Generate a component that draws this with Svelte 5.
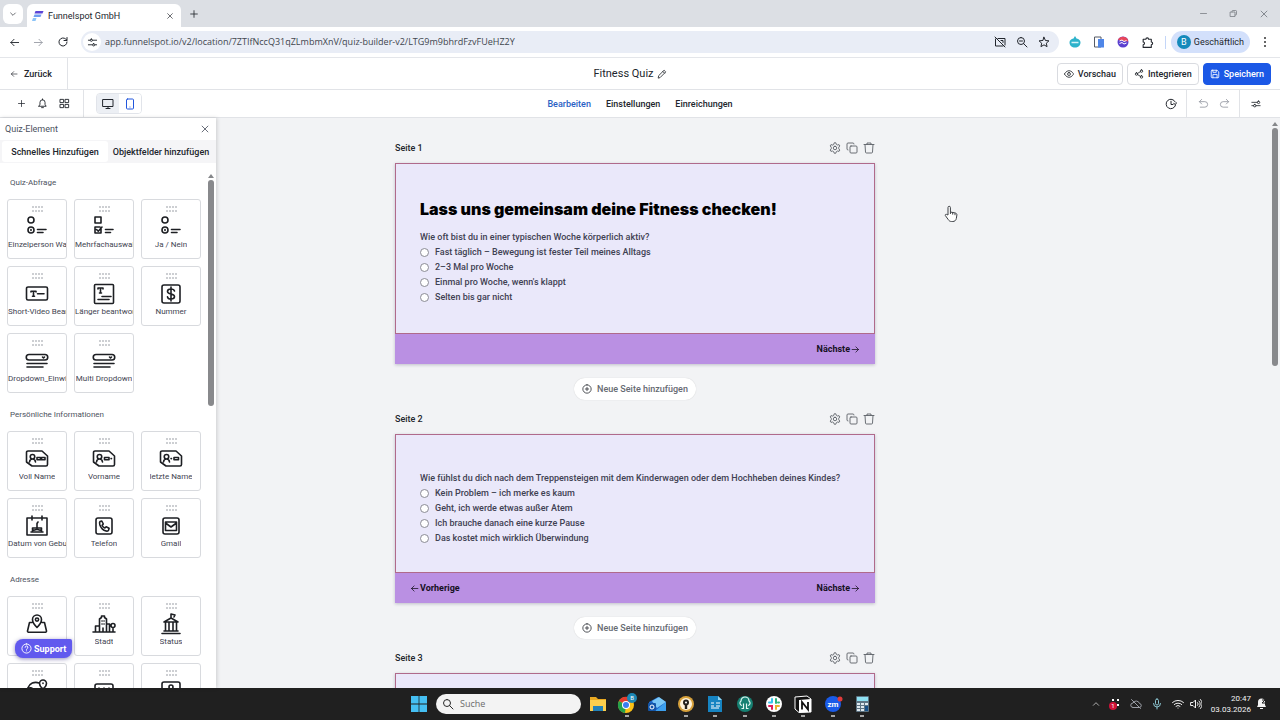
<script>
  // Stroke icons on a 24 x 24 grid
  const icons = {
    chevronDown: 'M5 9l7 7 7-7',
    chevronUp: 'M4 16l8-8 8 8',
    close: 'M5 5l14 14M19 5L5 19',
    plus: 'M12 4v16M4 12h16',
    minimize: 'M4 12h16',
    restore: 'M4 8h12v12H4zM8 8V6a2 2 0 0 1 2-2h8a2 2 0 0 1 2 2v8a2 2 0 0 1-2 2h-2',
    arrowLeft: 'M21 12H4M11 5l-7 7 7 7',
    arrowRight: 'M3 12h17M13 5l7 7-7 7',
    reload: 'M20 12a8 8 0 1 1-2.500-5.800L20 8.500M20 3v6h-6',
    tune: 'M3 7h3M13 7h8M3 17h8M18 17h3M9.500 4.500a2.500 2.500 0 1 0 0 5 2.500 2.500 0 0 0 0-5zM14.500 14.500a2.500 2.500 0 1 0 0 5 2.500 2.500 0 0 0 0-5z',
    noCamera: 'M8 5h14v13M18 20H3V6M2 2l20 20M14 9h4v4',
    zoomOut: 'M10 3a7 7 0 1 0 0 14 7 7 0 0 0 0-14zM15 15l7 7M7 10h6',
    star: 'M12 2.500l2.900 6.500 7 .7-5.300 4.700 1.500 6.900L12 17.700l-6.100 3.600 1.500-6.900L2.100 9.700l7-.7z',
    puzzle: 'M4 6h5a2.500 2.500 0 0 1 5 0h5v5a2.500 2.500 0 0 1 0 5v5H4v-5a2.500 2.500 0 0 0 0-5z',
    pencil: 'M3 21l1-5L17 3l4 4L8 20zM14 6l4 4',
    eye: 'M1 12s4-8 11-8 11 8 11 8-4 8-11 8S1 12 1 12zM12 8.500a3.500 3.500 0 1 0 0 7 3.500 3.500 0 0 0 0-7z',
    share: 'M18 2a3 3 0 1 0 0 6 3 3 0 0 0 0-6zM6 9a3 3 0 1 0 0 6 3 3 0 0 0 0-6zM18 16a3 3 0 1 0 0 6 3 3 0 0 0 0-6zM8.600 13.500l6.800 4M15.400 6.500l-6.800 4',
    save: 'M5 3h12l4 4v12a2 2 0 0 1-2 2H5a2 2 0 0 1-2-2V5a2 2 0 0 1 2-2zM7 3v5h8V3M7 21v-8h10v8',
    bell: 'M4 18h16l-2.500-4V9.500a5.500 5.500 0 0 0-11 0V14zM10 21h4M12 4V2',
    grid: 'M3 3h7v7H3zM14 3h7v7h-7zM3 14h7v7H3zM14 14h7v7h-7z',
    desktop: 'M2 3h20v14H2zM8 21h8M12 17v4',
    mobile: 'M7 2h10a2 2 0 0 1 2 2v16a2 2 0 0 1-2 2H7a2 2 0 0 1-2-2V4a2 2 0 0 1 2-2zM12 18v.1',
    history: 'M20.500 8a9.500 9.500 0 1 0 .5 6.500M23 9.500l-2 3.500-3.500-2M12 6.500V13h4',
    undo: 'M8 3L3 8l5 5M3 8h12a6 6 0 0 1 0 12H5',
    redo: 'M16 3l5 5-5 5M21 8H9a6 6 0 0 0 0 12h10',
    sliders: 'M2 8h13M2 16h4M12 16h10M18 5a3 3 0 1 0 0 6 3 3 0 0 0 0-6zM9 13a3 3 0 1 0 0 6 3 3 0 0 0 0-6z',
    gear: 'M9.500 4.500L10.500 1.500h3l1 3 2.500 1.500 3.100-.7 1.500 2.600L19.500 10.500v3l2.100 2.600-1.500 2.600L17 18l-2.500 1.500-1 3h-3l-1-3L7 18l-3.100.7-1.500-2.600 2.100-2.600v-3L2.400 7.900l1.500-2.600L7 6zM12 8.500a3.500 3.500 0 1 0 0 7 3.500 3.500 0 0 0 0-7z',
    copy: 'M10 8h10a2 2 0 0 1 2 2v10a2 2 0 0 1-2 2H10a2 2 0 0 1-2-2V10a2 2 0 0 1 2-2zM4 16a2 2 0 0 1-2-2V4a2 2 0 0 1 2-2h10a2 2 0 0 1 2 2',
    trash: 'M2 5h20M8 5V2h8v3M4 5l1 15a2 2 0 0 0 2 2h10a2 2 0 0 0 2-2l1-15',
    plusCircle: 'M12 2a10 10 0 1 0 0 20 10 10 0 0 0 0-20zM12 8v8M8 12h8',
    help: 'M12 2a10 10 0 1 0 0 20 10 10 0 0 0 0-20zM9 9.500a3 3 0 1 1 4 2.800c-.7.300-1 .9-1 1.700M12 17v.2',
    search: 'M10 3a7 7 0 1 0 0 14 7 7 0 0 0 0-14zM15 15l7 7',
    mic: 'M12 2a3 3 0 0 1 3 3v6a3 3 0 0 1-6 0V5a3 3 0 0 1 3-3zM5 11a7 7 0 0 0 14 0M12 18v4',
    wifi: 'M1 9a16 16 0 0 1 22 0M4.500 13a11 11 0 0 1 15 0M8 16.500a6 6 0 0 1 8 0M12 20v.2',
    volume: 'M2 9h4l5-5v16l-5-5H2zM15 9a4 4 0 0 1 0 6M18 6a8 8 0 0 1 0 12M21 3a13 13 0 0 1 0 18',
    cloudOff: 'M6 19h12a4 4 0 0 0 1-8 7 7 0 0 0-13-1 4.500 4.500 0 0 0 0 9zM3 3l18 18',

    radio: 'M6 2a3 3 0 1 0 0 6 3 3 0 0 0 0-6zM6 12a3 3 0 1 0 0 6 3 3 0 0 0 0-6zM6 14.600v.8M12.500 14.500h8.500M12.500 17.500h5.500',
    checks: 'M3 2h6v6H3zM9 13v5H3v-6h5M4.500 14.500l1.800 1.700L10 12M13.500 14.500H21M13.500 17.500h5',
    shortText: 'M3 5h18a1.500 1.500 0 0 1 1.500 1.500v10A1.500 1.500 0 0 1 21 18H3a1.500 1.500 0 0 1-1.500-1.500v-10A1.500 1.500 0 0 1 3 5zM6 10V9.200h5V10M8.500 9.200v5M7.500 14.200h2M12.500 11.800h6.500',
    longText: 'M3.500 2.500h17a1 1 0 0 1 1 1v17a1 1 0 0 1-1 1h-17a1 1 0 0 1-1-1v-17a1 1 0 0 1 1-1zM6 7V6h5v1M8.500 6v5M7.500 11h2M10 14.500h9M6 17.500h11',
    number: 'M5 3h14a2 2 0 0 1 2 2v14a2 2 0 0 1-2 2H5a2 2 0 0 1-2-2V5a2 2 0 0 1 2-2zM15.500 9c-.4-1.300-1.700-2-3.500-2-2 0-3.500.9-3.500 2.500 0 3.500 7 1.500 7 5 0 1.600-1.500 2.500-3.500 2.500s-3.300-.8-3.500-2.200M12 5v14',
    dropdown: 'M4 5.500h16a2.500 2.500 0 0 1 0 5.500H4a2.500 2.500 0 0 1 0-5.500zM17.500 8l1 1 1-1M2 14.500h20M2 18h16',
    fullName: 'M3 4h14l5.500 5v8.500A1.500 1.500 0 0 1 21 19H7l-5.500-4V5.500A1.500 1.500 0 0 1 3 4zM7.500 7.500a2 2 0 1 0 0 4.500 2 2 0 0 0 0-4.500zM4.500 15c.5-4 5.500-4 6 0M12 10.500h3.500v2.200H12zM16.500 10.500H20v2.200h-3.500z',
    firstName: 'M3 4h14l5.500 5v8.500A1.500 1.500 0 0 1 21 19H7l-5.500-4V5.500A1.500 1.500 0 0 1 3 4zM7.500 7.500a2 2 0 1 0 0 4.500 2 2 0 0 0 0-4.500zM4.500 15c.5-4 5.500-4 6 0M12.500 10.500H17v2.200h-4.500zM19 11.600h.5',
    lastName: 'M3 4h14l5.500 5v8.500A1.500 1.500 0 0 1 21 19H7l-5.500-4V5.500A1.500 1.500 0 0 1 3 4zM7.500 7.500a2 2 0 1 0 0 4.500 2 2 0 0 0 0-4.500zM4.500 15c.5-4 5.500-4 6 0M15 10.500h4.500v2.200H15zM12 11.600h.5',
    birthday: 'M2 4h20v17H2zM7 2v4M17 2v4M6 18h12M7.500 18v-4h9v4M7.500 15.500c1.500 1.500 3 0 4.500 0s3 1.500 4.500 0M12 14V9.500l1-1.500',
    phone: 'M6 4h12a2 2 0 0 1 2 2v12a2 2 0 0 1-2 2H6a2 2 0 0 1-2-2V6a2 2 0 0 1 2-2zM8 7.500l1.800-.5 1.500 3-1.200 1.200c.6 1.400 1.500 2.200 2.800 2.800l1.200-1.200 3 1.500-.5 1.800c-.3 1-1.500 1.200-2.500.9-3-.8-5.200-3-6.300-6.300-.3-1.200-.3-2.600.2-3.200z',
    mail: 'M6 4h12a2 2 0 0 1 2 2v12a2 2 0 0 1-2 2H6a2 2 0 0 1-2-2V6a2 2 0 0 1 2-2zM6.500 8h11v8.500h-11zM6.500 9l5.500 4 5.500-4',
    address: 'M12 15.500S7.500 11 7.500 7.500a4.500 4.500 0 0 1 9 0C16.500 11 12 15.500 12 15.500zM12 6a1.600 1.600 0 1 0 0 3.200A1.600 1.600 0 0 0 12 6zM7 10.500H4.500L2.500 19a1 1 0 0 0 1 1.200h17a1 1 0 0 0 1-1.200l-2-8.500H17',
    city: 'M1 20h22M3.500 20v-6h4M7.500 20V7l2-1.500V4h3v1.500l2 1.500v13M14.500 12h3v8M10 9h.1M12 9h.1M10 12h.1M12 12h.1M11 20v-4M21 20v-4.500M21 11.500a2 2 0 1 0 0 4 2 2 0 0 0 0-4z',
    state: 'M3 21.500h18M5 19h14M5 10h14l-7-4zM12 6V2l4 1-1 2M6.500 10v9M10 10v9M14 10v9M17.500 10v9',
    country: 'M19 14a8.500 8.500 0 1 1-5-10M4 9c3-1 5 1 4 4M18 10s-3.500-3-3.500-5.500a3.500 3.500 0 0 1 7 0C21.500 7 18 10 18 10zM18 4v.5',
    zip: 'M5 5h14a2 2 0 0 1 2 2v12H3V7a2 2 0 0 1 2-2zM7 9v2M12 9v2M17 9v2',
    website: 'M5 3h14a2 2 0 0 1 2 2v14H3V5a2 2 0 0 1 2-2zM12 6a2 2 0 1 0 0 4 2 2 0 0 0 0-4zM8 14c0-4 8-4 8 0'
  };

  const sections = [
    {
      title: 'Quiz-Abfrage',
      items: [
        { label: 'Einzelperson Wahl', icon: 'radio' },
        { label: 'Mehrfachauswahl', icon: 'checks' },
        { label: 'Ja / Nein', icon: 'radio' },
        { label: 'Short-Video Beantworten', icon: 'shortText' },
        { label: 'Länger beantworten', icon: 'longText' },
        { label: 'Nummer', icon: 'number' },
        { label: 'Dropdown_Einwilligung', icon: 'dropdown' },
        { label: 'Multi Dropdown', icon: 'dropdown' }
      ]
    },
    {
      title: 'Persönliche Informationen',
      items: [
        { label: 'Voll Name', icon: 'fullName' },
        { label: 'Vorname', icon: 'firstName' },
        { label: 'letzte Name', icon: 'lastName' },
        { label: 'Datum von Geburt', icon: 'birthday' },
        { label: 'Telefon', icon: 'phone' },
        { label: 'Gmail', icon: 'mail' }
      ]
    },
    {
      title: 'Adresse',
      items: [
        { label: 'Adresse', icon: 'address' },
        { label: 'Stadt', icon: 'city' },
        { label: 'Status', icon: 'state' },
        { label: 'Land', icon: 'country' },
        { label: 'Postleitzahl', icon: 'zip' },
        { label: 'Website', icon: 'website' }
      ]
    }
  ];

  const pages = [
    {
      name: 'Seite 1',
      title: 'Lass uns gemeinsam deine Fitness checken!',
      question: 'Wie oft bist du in einer typischen Woche körperlich aktiv?',
      options: [
        'Fast täglich – Bewegung ist fester Teil meines Alltags',
        '2–3 Mal pro Woche',
        "Einmal pro Woche, wenn's klappt",
        'Selten bis gar nicht'
      ]
    },
    {
      name: 'Seite 2',
      back: true,
      question: 'Wie fühlst du dich nach dem Treppensteigen mit dem Kinderwagen oder dem Hochheben deines Kindes?',
      options: [
        'Kein Problem – ich merke es kaum',
        'Geht, ich werde etwas außer Atem',
        'Ich brauche danach eine kurze Pause',
        'Das kostet mich wirklich Überwindung'
      ]
    },
    { name: 'Seite 3', back: true, question: '', options: [] }
  ];

  let answers = $state(['', '', '']);
  let view = $state('Bearbeiten');
  let url = $state('app.funnelspot.io/v2/location/7ZTIfNccQ31qZLmbmXnV/quiz-builder-v2/LTG9m9bhrdFzvFUeHZ2Y');
</script>

{#snippet icon(name, size = 12)}
  <svg class="icon" width={size} height={size} viewBox="0 0 24 24" aria-hidden="true">
    <path d={icons[name]} />
  </svg>
{/snippet}

<div class="screen">
  <div class="tab-strip">
    <button class="tab-search" aria-label="Tabs durchsuchen">{@render icon('chevronDown', 8)}</button>
    <div class="tab">
      <svg width="12" height="12" viewBox="0 0 24 24" aria-hidden="true">
        <path d="M7 2h16l-2 5H5z" fill="#5b45d6" />
        <path d="M5 9h14l-2 5H3z" fill="#6f9df0" />
        <path d="M2 16h7l-2 6H0z" fill="#8cc4f8" />
      </svg>
      <span>Funnelspot GmbH</span>
      <button class="bare" aria-label="Tab schließen">{@render icon('close', 8)}</button>
    </div>
    <button class="bare new-tab" aria-label="Neuer Tab">{@render icon('plus', 10)}</button>
    <div class="window-controls">
      <button class="bare" aria-label="Minimieren">{@render icon('minimize', 9)}</button>
      <button class="bare" aria-label="Verkleinern">{@render icon('restore', 9)}</button>
      <button class="bare" aria-label="Schließen">{@render icon('close', 10)}</button>
    </div>
  </div>

  <div class="toolbar">
    <div class="nav">
      <button class="bare" aria-label="Zurück">{@render icon('arrowLeft', 11)}</button>
      <button class="bare faded" aria-label="Vorwärts">{@render icon('arrowRight', 11)}</button>
      <button class="bare" aria-label="Neu laden">{@render icon('reload', 12)}</button>
    </div>
    <div class="omnibox">
      <span class="site-info">{@render icon('tune', 11)}</span>
      <input type="text" aria-label="Adresse" bind:value={url} />
      {@render icon('noCamera', 12)}
      {@render icon('zoomOut', 12)}
      {@render icon('star', 12)}
    </div>
    <div class="extensions">
      <svg width="12" height="12" viewBox="0 0 24 24" aria-hidden="true">
        <path d="M12 0l3 5c5 1 8 4 8 8 0 6-5 10-11 10S1 19 1 13c0-4 3-7 8-8z" fill="#2eb3cb" />
        <path d="M5 13h14" stroke="#d4f3f8" stroke-width="3" />
      </svg>
      <svg width="12" height="12" viewBox="0 0 24 24" aria-hidden="true">
        <path d="M3 2h13v20H3z" fill="#fff" stroke="#555b66" stroke-width="2" />
        <path d="M10 6h12v17H10z" fill="#4f86e8" />
      </svg>
      <svg width="12" height="12" viewBox="0 0 24 24" aria-hidden="true">
        <circle cx="12" cy="12" r="11" fill="#5a3fd0" />
        <path d="M2 8a11 11 0 0 1 20 0v3z" fill="#e8455a" />
        <path d="M5 10l5-2 4 3 5-2M5 15l5-2 4 3 5-2" stroke="#fff" stroke-width="2" fill="none" />
      </svg>
      {@render icon('puzzle', 13)}
    </div>
    <button class="profile"><span>B</span>Geschäftlich</button>
    <button class="bare kebab" aria-label="Menü"><i></i><i></i><i></i></button>
  </div>

  <header class="app-header">
    <button class="back">{@render icon('arrowLeft', 8)}Zurück</button>
    <h1>Fitness Quiz {@render icon('pencil', 10)}</h1>
    <div class="actions">
      <button class="btn">{@render icon('eye', 10)}Vorschau</button>
      <button class="btn">{@render icon('share', 10)}Integrieren</button>
      <button class="btn primary">{@render icon('save', 10)}Speichern</button>
    </div>
  </header>

  <div class="subbar">
    <div class="tools">
      <div class="quick">
        <button class="bare" aria-label="Hinzufügen">{@render icon('plus', 9)}</button>
        <button class="bare" aria-label="Mitteilungen">{@render icon('bell', 11)}</button>
        <button class="bare" aria-label="Elemente">{@render icon('grid', 11)}</button>
      </div>
      <div class="devices">
        <button class="active" aria-label="Desktop">{@render icon('desktop', 12)}</button>
        <button class="mobile" aria-label="Mobil">{@render icon('mobile', 12)}</button>
      </div>
    </div>
    <nav>
      {#each ['Bearbeiten', 'Einstellungen', 'Einreichungen'] as name}
        <button class="bare" class:selected={view === name} onclick={() => (view = name)}>{name}</button>
      {/each}
    </nav>
    <div class="edit-tools">
      <button class="bare" aria-label="Verlauf">{@render icon('history', 12)}</button>
      <div class="undo">
        <button class="bare faded" aria-label="Rückgängig">{@render icon('undo', 11)}</button>
        <button class="bare faded" aria-label="Wiederholen">{@render icon('redo', 11)}</button>
      </div>
      <button class="bare" aria-label="Optionen">{@render icon('sliders', 10)}</button>
    </div>
  </div>

  <div class="workspace">
    <main class="canvas">
      {#each pages as page, p}
        <section class="page">
          <div class="page-head">
            <h2>{page.name}</h2>
            <button class="bare" aria-label="Seite einstellen">{@render icon('gear', 12)}</button>
            <button class="bare" aria-label="Seite kopieren">{@render icon('copy', 12)}</button>
            <button class="bare" aria-label="Seite löschen">{@render icon('trash', 12)}</button>
          </div>
          <div class="page-card">
            <fieldset class:titled={page.title}>
              {#if page.title}<h3>{page.title}</h3>{/if}
              <p>{page.question}</p>
              {#each page.options as option}
                <label>
                  <input type="radio" name="page-{p}" value={option} bind:group={answers[p]} />
                  {option}
                </label>
              {/each}
            </fieldset>
            {#if page.options.length}
              <div class="page-nav">
                {#if page.back}
                  <button class="bare">{@render icon('arrowLeft', 9)}Vorherige</button>
                {/if}
                <button class="bare next">Nächste{@render icon('arrowRight', 9)}</button>
              </div>
            {/if}
          </div>
          {#if page.options.length}
            <button class="add-page">{@render icon('plusCircle', 10)}Neue Seite hinzufügen</button>
          {/if}
        </section>
      {/each}
    </main>
    <div class="scrollbar"><i></i><b></b></div>

    <aside class="panel">
      <div class="panel-head">
        <span>Quiz-Element</span>
        <button class="bare" aria-label="Schließen">{@render icon('close', 10)}</button>
      </div>
      <div class="panel-tabs">
        <button class="current">Schnelles Hinzufügen</button>
        <button>Objektfelder hinzufügen</button>
      </div>
      <div class="panel-body">
        <div class="sections">
          {#each sections as section}
            <h4>{section.title}</h4>
            <div class="tiles">
              {#each section.items as item}
                <button class="tile">
                  <svg class="grip" width="11" height="6" viewBox="0 0 11 6" aria-hidden="true">
                    <path d="M0 1h11M0 5h11" />
                  </svg>
                  {@render icon(item.icon, 24)}
                  <span>{item.label}</span>
                </button>
              {/each}
            </div>
          {/each}
        </div>
        <div class="scrollbar"><i></i><b></b></div>
      </div>
      <button class="support">{@render icon('help', 11)}Support</button>
    </aside>

    <svg class="pointer" width="14" height="18" viewBox="0 0 14 18" aria-hidden="true">
      <path d="M4 10V2.500a1.200 1.200 0 0 1 2.400 0V7l5 1c1 .3 1.600 1 1.500 2l-.6 3.500c-.3 1.800-1.600 3-3.500 3H7.500c-1.500 0-2.500-.7-3.300-2L1.300 10.500c-.3-1 .7-1.600 1.500-1z" fill="#fff" stroke="#3c3f44" />
      <path d="M6.400 7v2M8.700 7.600v2M11 8.200v2" stroke="#3c3f44" />
    </svg>
  </div>

  <footer class="taskbar">
    <div class="dock">
      <svg width="16" height="16" viewBox="0 0 16 16" aria-hidden="true">
        <path d="M0 0h7.600v7.600H0zM8.400 0H16v7.600H8.400zM0 8.400h7.600V16H0zM8.400 8.400H16V16H8.400z" fill="#45bff2" />
      </svg>
      <div class="search">
        {@render icon('search', 12)}
        <input type="search" placeholder="Suche" aria-label="Suche" />
      </div>
      <div class="apps">
        <svg viewBox="0 0 20 20" aria-hidden="true">
          <path d="M2 3h6l2 2h8v11H2z" fill="#e9a922" />
          <path d="M2 6h16v11H2z" fill="#fccf4d" />
          <path d="M5 12h10v5H5z" fill="#2382b8" />
        </svg>
        <svg viewBox="0 0 20 20" aria-hidden="true">
          <circle cx="9" cy="11" r="8" fill="#fbc116" />
          <path d="M9 11L2 7a8 8 0 0 1 14 0z" fill="#e33b2e" />
          <path d="M9 11L2 7a8 8 0 0 0 6 12z" fill="#23a04b" />
          <circle cx="9" cy="11" r="4" fill="#fff" />
          <circle cx="9" cy="11" r="3" fill="#3a7df0" />
          <circle cx="15" cy="4" r="5" fill="#1b87b4" />
          <text x="15" y="6">B</text>
          <path class="running" d="M8 22h4" />
        </svg>
        <svg viewBox="0 0 20 20" aria-hidden="true">
          <path d="M2 8l9-5 8 5v9H2z" fill="#1d68c9" />
          <path d="M5 7l7-4 7 5-9 6z" fill="#7bc8f6" />
          <path d="M8 17l11-9v9z" fill="#3da0ee" />
          <rect x="1" y="9" width="8" height="8" rx="1" fill="#1456a8" />
          <circle cx="5" cy="13" r="2" fill="none" stroke="#fff" />
        </svg>
        <svg viewBox="0 0 20 20" aria-hidden="true">
          <circle cx="10" cy="10" r="8" fill="#d7a13b" />
          <circle cx="10" cy="10" r="6" fill="#fff4dc" />
          <circle cx="10" cy="8.500" r="3" fill="#24211c" />
          <path d="M8.800 10h2.400v5H8.800z" fill="#24211c" />
          <circle cx="10" cy="8.500" r="1" fill="#fff" />
          <path class="running" d="M8 22h4" />
        </svg>
        <svg viewBox="0 0 20 20" aria-hidden="true">
          <path d="M3 2h10l4 4v12H3z" fill="#1684c2" />
          <path d="M13 2l4 4h-4z" fill="#91d7f5" />
          <path d="M6 9h3M11 9h4M6 12h3M11 12h4M6 14h8" stroke="#fff" />
          <path class="running" d="M8 22h4" />
        </svg>
        <svg viewBox="0 0 20 20" aria-hidden="true">
          <circle cx="10" cy="10" r="8" fill="#168072" />
          <path d="M7 11.500a2.500 2.500 0 0 1-1-4.500 4 4 0 0 1 8 0 2.500 2.500 0 0 1-1 4.500M8.500 9.500v5h-2M11.500 9.500v5h2" fill="none" stroke="#e4f7f3" stroke-width="1.200" />
          <path class="running" d="M8 22h4" />
        </svg>
        <svg viewBox="0 0 20 20" aria-hidden="true">
          <circle cx="10" cy="10" r="8" fill="#fff" />
          <g fill="none" stroke-width="2" stroke-linecap="round">
            <path d="M8 5v3M5 8.500h3" stroke="#36c5f0" />
            <path d="M12 5v4M15 8.500h-1" stroke="#2eb67d" />
            <path d="M12 15v-3h3" stroke="#ecb22e" />
            <path d="M8 15v-3H5" stroke="#e01e5a" />
          </g>
          <path class="running" d="M8 22h4" />
        </svg>
        <svg viewBox="0 0 20 20" aria-hidden="true">
          <path d="M2 3l12-1 4 3v13l-12 .5L2 15z" fill="#111" stroke="#fff" />
          <path d="M6 6l12-1v13L6 18.500z" fill="#fff" />
          <path d="M9 15.500V8l6 7.500V8" fill="none" stroke="#111" stroke-width="1.800" />
          <path class="running" d="M8 22h4" />
        </svg>
        <svg viewBox="0 0 20 20" aria-hidden="true">
          <circle cx="10" cy="10" r="8" fill="#1a5be8" />
          <text class="zoom" x="10" y="13">zm</text>
          <circle cx="17" cy="5" r="2.500" fill="#e23b3b" />
          <path class="running" d="M8 22h4" />
        </svg>
        <svg viewBox="0 0 20 20" aria-hidden="true">
          <rect x="4" y="2" width="13" height="16" rx="1" fill="#5e7483" />
          <path d="M5 3h11v4H5z" fill="#8ee0f2" />
          <path d="M5 9h3v2H5zM9 9h3v2H9zM13 9h3v2h-3zM5 12h3v2H5zM9 12h3v2H9zM5 15h3v2H5zM9 15h3v2H9z" fill="#dfe8ee" />
          <path d="M13 12h3v5h-3z" fill="#174f86" />
          <path class="running" d="M8 22h4" />
        </svg>
      </div>
    </div>
    <div class="tray">
      {@render icon('chevronUp', 8)}
      <svg width="12" height="12" viewBox="0 0 12 12" aria-hidden="true">
        <path d="M3 2h2M8 2h2M8 7h2" stroke="#fff" stroke-width="2" />
        <circle cx="4" cy="8" r="4" fill="#cf1238" />
        <text class="count" x="4" y="10">1</text>
      </svg>
      <span class="faded">{@render icon('cloudOff', 12)}</span>
      <span class="mic">{@render icon('mic', 12)}</span>
      {@render icon('wifi', 12)}
      {@render icon('volume', 12)}
      <time datetime="2026-03-03T20:47">20:47<br />03.03.2026</time>
      <svg width="11" height="12" viewBox="0 0 11 12" aria-hidden="true">
        <path d="M1 9l1-2V4a3 3 0 0 1 7 0v3l1 2zM4 10h3v1H4z" fill="#f2f2f2" />
        <path d="M6 2h3L6 5h3" fill="none" stroke="#202020" />
      </svg>
    </div>
  </footer>
</div>

<style>
  :global(body) {
    margin: 0;
  }

  .screen {
    height: 100vh;
    display: flex;
    flex-direction: column;
    overflow: hidden;
    background: #fff;
    color: #22262d;
    font: 9px/14px Roboto, "Open Sans", sans-serif;
  }

  .screen :is(h1, h2, h3, h4, p, fieldset) {
    margin: 0;
    font-size: inherit;
    font-weight: inherit;
  }

  button,
  input {
    font: inherit;
    color: inherit;
  }

  button {
    display: flex;
    align-items: center;
    justify-content: center;
    cursor: pointer;
  }

  .bare {
    padding: 0;
    border: 0;
    background: none;
  }

  .icon {
    flex: none;
    display: block;
    fill: none;
    stroke: currentColor;
    stroke-width: 2;
    stroke-linecap: round;
    stroke-linejoin: round;
  }

  .faded {
    color: #9a9ea6;
  }

  /* Browser chrome */
  .tab-strip {
    flex: none;
    display: flex;
    align-items: center;
    height: 27px;
    padding-left: 3px;
    background: #dcdfe4;
  }

  .tab-search {
    width: 20px;
    height: 20px;
    padding: 0;
    border: 0;
    border-radius: 6px;
    background: #fff;
  }

  .tab {
    display: flex;
    align-items: center;
    align-self: end;
    gap: 4px;
    width: 142px;
    height: 23px;
    margin-left: 4px;
    padding: 0 7px 0 5px;
    border-radius: 6px 6px 0 0;
    background: #fff;
  }

  .tab span {
    flex: 1;
  }

  .new-tab {
    margin-left: 8px;
  }

  .window-controls {
    display: flex;
    gap: 21px;
    margin-left: auto;
    padding-right: 11px;
    color: #74787f;
  }

  .toolbar {
    flex: none;
    display: flex;
    align-items: center;
    height: 30px;
    border-bottom: 1px solid #e4e6ea;
  }

  .nav {
    display: flex;
    gap: 13px;
    padding: 0 12px 0 9px;
  }

  .omnibox {
    flex: 1;
    display: flex;
    align-items: center;
    gap: 10px;
    height: 22px;
    padding: 0 9px 0 2px;
    border-radius: 11px;
    background: #e9edf6;
  }

  .site-info {
    display: grid;
    place-items: center;
    width: 18px;
    height: 18px;
    border-radius: 50%;
    background: #fff;
  }

  .omnibox input {
    flex: 1;
    min-width: 0;
    margin-left: -6px;
    padding: 0;
    border: 0;
    background: none;
    outline: 0;
    color: #41464e;
    font-family: "Open Sans", "Noto Sans", sans-serif;
  }

  .extensions {
    display: flex;
    align-items: center;
    gap: 12px;
    padding: 0 11px 0 10px;
    border-right: 1px solid #c4d6f8;
  }

  .profile {
    gap: 3px;
    height: 22px;
    margin-left: 5px;
    padding: 0 6px;
    border: 0;
    border-radius: 11px;
    background: #d3e0fb;
  }

  .profile span {
    width: 14px;
    border-radius: 50%;
    background: #168abb;
    color: #fff;
  }

  .kebab {
    flex-direction: column;
    gap: 2px;
    width: 30px;
  }

  .kebab i {
    width: 2px;
    height: 2px;
    border-radius: 50%;
    background: #333;
  }

  /* Builder header */
  .app-header,
  .subbar {
    flex: none;
    display: grid;
    grid-template-columns: 1fr auto 1fr;
    align-items: center;
    box-sizing: border-box;
    border-bottom: 1px solid #e1e3e7;
    font-weight: 500;
  }

  .app-header {
    height: 32px;
  }

  .back {
    gap: 6px;
    justify-self: start;
    height: 31px;
    padding: 0 15px 0 10px;
    border: 0;
    border-right: 1px solid #e1e3e7;
    background: none;
  }

  .app-header h1 {
    display: flex;
    align-items: center;
    gap: 3px;
    margin-right: 20px;
    font-size: 11px;
    font-weight: 400;
  }

  .actions {
    display: flex;
    justify-content: end;
    gap: 4px;
    padding-right: 9px;
  }

  .btn {
    gap: 4px;
    height: 22px;
    padding: 0 6px;
    border: 1px solid #d9dbe0;
    border-radius: 4px;
    background: #fff;
  }

  .primary {
    border-color: #1b58e6;
    background: #1b58e6;
    color: #fff;
  }

  .subbar {
    height: 28px;
  }

  .tools,
  .quick,
  .devices,
  .edit-tools,
  .undo {
    display: flex;
    align-items: center;
  }

  .quick {
    gap: 11px;
    height: 27px;
    padding: 0 13px 0 17px;
    border-right: 1px solid #e1e3e7;
  }

  .devices {
    margin-left: 12px;
    border: 1px solid #e1e4ea;
    border-radius: 4px;
    overflow: hidden;
  }

  .devices button {
    width: 22px;
    height: 19px;
    padding: 0;
    border: 0;
    background: #fff;
  }

  .devices .active {
    background: #eceff4;
  }

  .devices .mobile {
    color: #2257dd;
  }

  nav {
    display: flex;
    gap: 15px;
  }

  .selected {
    color: #2a5fc4;
  }

  .edit-tools {
    justify-content: end;
    gap: 9px;
    padding-right: 19px;
  }

  .undo {
    gap: 10px;
    height: 27px;
    padding: 0 9px 0 11px;
    border: solid #e1e3e7;
    border-width: 0 1px;
  }

  .edit-tools > :last-child {
    margin-left: 2px;
  }

  /* Canvas */
  .workspace {
    position: relative;
    flex: 1;
    min-height: 0;
    display: flex;
    background: #f2f3f5;
  }

  .canvas {
    flex: 1;
    display: flex;
    flex-direction: column;
    align-items: center;
    gap: 11px;
    padding-top: 22px;
    overflow: hidden;
  }

  .page {
    flex: none;
    width: 100%;
    max-width: 480px;
    font-weight: 500;
    line-height: 15px;
  }

  .page-head {
    display: flex;
    align-items: center;
    gap: 5px;
    height: 16px;
    margin-bottom: 7px;
    color: #5c6168;
  }

  .page-head .icon {
    stroke-width: 1.8;
  }

  .page-head h2 {
    flex: 1;
    color: #22262d;
  }

  .page-card {
    box-shadow: 0 1px 3px rgba(40, 30, 70, 0.25);
  }

  fieldset {
    min-width: 0;
    padding: 36px 24px 26px;
    border: 1px solid #b06a8b;
    background: #eae8fa;
    color: #3f4152;
  }

  fieldset.titled {
    padding-bottom: 28px;
  }

  .page h3 {
    margin-bottom: 12px;
    color: #000;
    font-family: Inter, sans-serif;
    font-size: 16px;
    font-weight: 900;
    line-height: 18px;
  }

  label {
    display: flex;
    align-items: center;
    gap: 6px;
  }

  label input {
    appearance: none;
    width: 9px;
    height: 9px;
    margin: 0;
    border: 1px solid #8b8b95;
    border-radius: 50%;
    background: #fff;
  }

  label input:checked {
    background: #b98fe3;
  }

  .page-nav {
    display: flex;
    height: 30px;
    padding: 0 15px;
    background: #ba90e3;
    color: #16101f;
    font-weight: 700;
  }

  .page-nav button {
    gap: 1px;
  }

  .next {
    margin-left: auto;
  }

  .add-page {
    gap: 5px;
    height: 22px;
    margin: 14px auto 0;
    padding: 0 8px;
    border: 0;
    border-radius: 11px;
    background: #fff;
    box-shadow: 0 0 1px rgba(0, 0, 0, 0.2);
    color: #666a72;
  }

  .add-page .icon {
    color: #30343a;
  }

  .scrollbar {
    display: flex;
    flex-direction: column;
    align-items: center;
    gap: 2px;
    width: 10px;
    padding-top: 4px;
  }

  .scrollbar i {
    border: 3px solid transparent;
    border-top: 0;
    border-bottom: 4px solid #85878a;
  }

  .scrollbar b {
    width: 6px;
    height: 42%;
    border-radius: 3px;
    background: #88898c;
  }

  /* Element panel floats above the canvas */
  .panel {
    position: absolute;
    inset: 0 auto 0 0;
    display: flex;
    flex-direction: column;
    width: 216px;
    background: #fff;
    box-shadow: 1px 0 4px rgba(0, 0, 0, 0.16);
  }

  .panel-head {
    display: flex;
    align-items: center;
    justify-content: space-between;
    height: 22px;
    padding: 0 6px 0 5px;
    color: #4c5260;
  }

  .panel-tabs {
    display: flex;
    height: 23px;
    padding: 1px 2px;
    box-sizing: border-box;
    background: #f5f5f7;
    font-weight: 500;
  }

  .panel-tabs button {
    flex: 1;
    padding: 0;
    border: 0;
    border-radius: 3px;
    background: none;
    white-space: nowrap;
  }

  .panel-tabs .current {
    background: #fff;
  }

  .panel-body {
    flex: 1;
    min-height: 0;
    display: flex;
    overflow: hidden;
  }

  .sections {
    flex: 1;
    padding: 14px 5px 0 7px;
  }

  .panel-body .scrollbar {
    margin-top: 7px;
  }

  .panel-body .scrollbar b {
    height: 44%;
  }

  h4 {
    padding: 0 3px 10px;
    color: #4c5260;
    line-height: 12px;
  }

  .sections h4 {
    font-size: 8px;
  }

  .tiles {
    display: grid;
    grid-template-columns: repeat(3, 1fr);
    gap: 7px;
    margin-bottom: 16px;
  }

  .tile {
    flex-direction: column;
    justify-content: start;
    height: 60px;
    min-width: 0;
    padding: 6px 0 0;
    border: 1px solid #d8dade;
    border-radius: 3px;
    background: #fff;
    color: #1d1f23;
    font-size: 8px;
    line-height: 12px;
    overflow: hidden;
  }

  .tile .icon {
    margin: 3px 0 0;
    stroke-width: 1.6;
  }

  .tile span {
    max-width: 100%;
    overflow: hidden;
    white-space: nowrap;
    color: #3f4552;
  }

  .grip {
    flex: none;
    stroke: #9b9fa6;
    stroke-dasharray: 2 1;
  }

  .support {
    position: absolute;
    left: 15px;
    bottom: 30px;
    gap: 2px;
    height: 19px;
    padding: 0 6px;
    border: 0;
    border-radius: 8px 2px 8px 8px;
    background: #6159ee;
    box-shadow: 0 1px 4px rgba(40, 30, 120, 0.5);
    color: #fff;
    font-weight: 700;
  }

  .pointer {
    position: absolute;
    left: 74%;
    top: 87px;
    margin-left: -3px;
    fill: none;
  }

  /* Windows taskbar */
  .taskbar {
    flex: none;
    display: grid;
    grid-template-columns: 1fr auto 1fr;
    align-items: center;
    height: 32px;
    background: #202020;
    color: #f2f2f2;
  }

  .dock {
    grid-column: 2;
    display: flex;
    align-items: center;
    padding-left: 3px;
  }

  .search {
    display: flex;
    align-items: center;
    gap: 6px;
    width: 145px;
    height: 20px;
    margin: 0 7px 0 9px;
    padding: 0 6px;
    box-sizing: border-box;
    border-radius: 10px;
    background: #f3f3f3;
    color: #2a2a2a;
  }

  .search input {
    flex: 1;
    min-width: 0;
    padding: 0;
    border: 0;
    background: none;
    outline: 0;
    font-family: "Open Sans", "Noto Sans", sans-serif;
  }

  .search input::placeholder {
    color: #6b6b6b;
  }

  .apps {
    display: flex;
    justify-content: space-between;
    width: 284px;
  }

  .apps svg {
    width: 20px;
    height: 20px;
    overflow: visible;
  }

  .running {
    stroke: #a5a5a5;
    stroke-width: 2;
  }

  .taskbar text {
    fill: #fff;
    font-size: 6px;
    text-anchor: middle;
  }

  .taskbar .zoom {
    font-size: 8px;
    font-weight: 700;
  }

  .tray {
    display: flex;
    align-items: center;
    justify-content: end;
    gap: 9px;
    padding-right: 13px;
  }

  .tray .icon + .icon {
    margin-left: -3px;
  }

  .mic {
    color: #8cc6d2;
  }

  time {
    margin-right: -4px;
    font-size: 8px;
    line-height: 11px;
    text-align: right;
  }
</style>
